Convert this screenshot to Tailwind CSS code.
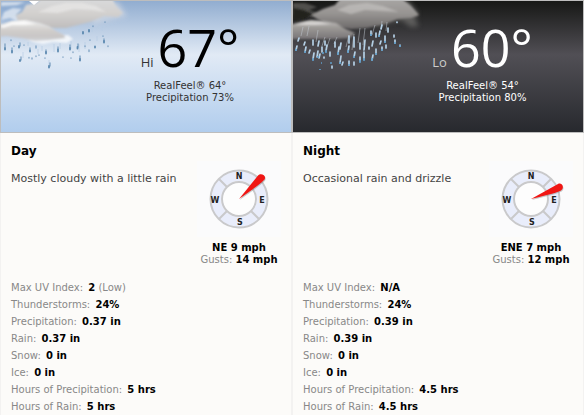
<!DOCTYPE html>
<html lang="en">
<head>
<meta charset="utf-8">
<meta name="viewport" content="width=device-width, initial-scale=1">
<title>Day and night forecast</title>
<script src="https://cdn.jsdelivr.net/npm/@tailwindcss/browser@4"></script>
</head>
<body class="bg-[#fcfbf9] font-['DejaVu_Sans',Verdana,sans-serif] text-[10px] text-black">
<svg width="0" height="0" class="absolute" aria-hidden="true">
  <defs>
    <filter id="soft" x="-20%" y="-40%" width="140%" height="180%"><feGaussianBlur stdDeviation="1.2"/></filter>
    <filter id="haze" x="-40%" y="-80%" width="180%" height="260%"><feGaussianBlur stdDeviation="2.6"/></filter>
    <filter id="drop" x="-10%" y="-10%" width="120%" height="120%"><feGaussianBlur stdDeviation=".35"/></filter>
    <linearGradient id="dayBack" x1="0" y1="0" x2="0" y2="1"><stop offset="0" stop-color="#d9dadc"/><stop offset=".5" stop-color="#d3d1cf"/><stop offset="1" stop-color="#bfbdbd"/></linearGradient>
    <linearGradient id="dayFront" x1="0" y1="0" x2="0" y2="1"><stop offset="0" stop-color="#eeeeed"/><stop offset=".5" stop-color="#d0cdcb"/><stop offset=".8" stop-color="#c8c6c6"/><stop offset="1" stop-color="#d4d6da"/></linearGradient>
    <linearGradient id="nightBack" x1="0" y1="0" x2="0" y2="1"><stop offset="0" stop-color="#a9a7a5"/><stop offset=".5" stop-color="#979492"/><stop offset="1" stop-color="#6d6a6a"/></linearGradient>
    <linearGradient id="nightFront" x1="0" y1="0" x2="0" y2="1"><stop offset="0" stop-color="#c3c1bf"/><stop offset=".4" stop-color="#9c9996"/><stop offset="1" stop-color="#787577"/></linearGradient>
    <g id="dial">
      <circle cx="42" cy="38" r="23" fill="none" stroke="#e9edfb" stroke-width="10"/>
      <circle cx="42" cy="38" r="17" fill="#fdfdfd" stroke="#c9c9cb" stroke-width="2"/>
      <circle cx="42" cy="38" r="28.500" fill="none" stroke="#c9c9cb" stroke-width="2"/>
      <path d="M30 26l-8-8M54 26l8-8M30 50l-8 8M54 50l8 8" stroke="#c9c9cb" stroke-width="2"/>
      <g class="font-['DejaVu_Sans',sans-serif] text-[8px] font-bold" fill="#222" text-anchor="middle">
        <text x="42" y="18">N</text><text x="65" y="42">E</text><text x="43" y="64">S</text><text x="18" y="42">W</text>
      </g>
    </g>
  </defs>
</svg>

<main class="grid min-h-screen grid-cols-2">
  <section class="flex flex-col">
    <header class="relative h-[133px] border border-[#bdbdbd] bg-linear-[180deg,#91add0_0%,#e1eaf5_41%,#b1cded_100%] pl-22 pt-4 text-center text-[#333]">
      <svg class="absolute left-0 top-0" width="140" height="80" viewBox="1 1 140 80" aria-hidden="true">
        <path filter="url(#haze)" fill="#8aa9d0" d="M0 4h30v16H0z" opacity=".7"/>
        <path filter="url(#soft)" fill="#eef2f7" opacity=".7" d="M1 2h24l-8 3-16 1zM4 12l9-4 9 1-6 6 8 4-8 2-6-3-9 2z"/>
        <path filter="url(#haze)" fill="#d3d9e2" opacity=".7" d="M88 2h30l9 14-14 3-20 5z"/>
        <path filter="url(#soft)" fill="url(#dayBack)" d="M26 5l10-2 6-5h70l4 8 7 7-5 4-14-1-14 6-12 3-12 3-16 0-16-5-16-1-2-7 6-3z"/>
        <path filter="url(#soft)" fill="#e8e7e6" opacity=".75" d="M38 12l14-6 14-3 16 0 14 3 10 6-14-2-18-1-16 4z"/>
        <path filter="url(#soft)" fill="#fff" opacity=".75" d="M28 39l20-1 20-3 5 4-6 4-14-1-10 2-10-2z"/>
        <path filter="url(#soft)" fill="url(#dayFront)" d="M-4 25l8-1 8-3 14-1 14 3 9 3 7 5 8 4 1 3-16 2-14 1-14-3-15-2-10 1z"/>
        <path filter="url(#soft)" fill="#fff" opacity=".8" d="M0 26l12-4 12-1 12 3-12 1-12 0-9 3z"/>
        <path fill="#fff" d="M29 1h10l-5 4z"/>
        <g fill="none" stroke="#b6cce4" stroke-width="1" opacity=".7"><path d="M42 46v5M60 43v6M71 41v8M79 44v8M85 42v7M38 49v5M49 60v6M23 52v6M97 36v5M28 42v4M54 44v8M92 26v6M102 26v5"/></g>
        <path filter="url(#drop)" fill="none" stroke="#4f7fa8" stroke-opacity=".9" stroke-width="1.800" stroke-linecap="round" d="M5 48v1.500M12 51v1.500M19 46v1.500M20 60v1M30 50.500v1M46 52v1.500M49 66v1.500M58 49.500v2M70 48v1.500M77.500 47v1.500M80 59v1.500M83 32v1.500M89 30v1.500M95 46.500v1M104 41v1.500"/>
        <path filter="url(#drop)" fill="none" stroke="#5c88b0" stroke-opacity=".75" stroke-width="1.300" stroke-linecap="round" d="M5 44v3M11 40v.5M14 46v.3M12 48v3M20 43v3M24 45v.3M21 57v3M30 48v2M36 46v2M29 57.500v.5M32 58v1M36 56v.5M39 55v.3M46 50v2M45 58v.3M50 63v3M58 47v2M63 57v.3M70 45v3M73 52v.5M71 58v.2M78 44v3M80 56v3M85 46v.5M89 50v1.500M90 40v.3M93 26v.5M103 36v.3M104 39v2M108 46v.5M105 22v.3"/>
      </svg>
      <p class="relative flex h-15 items-baseline justify-center gap-1 font-['Open_Sans','Segoe_UI',sans-serif]"><span class="text-[13px]">Hi</span><span class="text-[52px] leading-15 text-black">67°</span></p>
      <p class="relative mt-[3px] leading-3">RealFeel® 64°<br>Precipitation 73%</p>
    </header>
    <div class="grow border-x border-[#f3f2f1] px-[10px] pt-2">
      <h2 class="text-[12px] font-bold leading-5">Day</h2>
      <div class="flex justify-between">
        <p class="pt-2 text-[11px] leading-5 text-[#444]">Mostly cloudy with a little rain</p>
        <div class="-ml-1 w-21 shrink-0 text-center leading-3">
          <svg class="mb-1 block bg-[#fbfbfc]" width="84" height="76" viewBox="0 0 84 76" role="img" aria-label="Wind from the northeast">
            <use href="#dial"/>
            <path d="M42 38L61 14.500C64 11 70 15 67.500 18.500Q65 22 42 38z" fill="#777" opacity=".4" transform="translate(.6 .9)"/>
            <path d="M42 38L61 14.500C64 11 70 15 67.500 18.500Q65 22 42 38z" fill="#f01614"/>
          </svg>
          <p class="pt-px"><b>NE 9 mph</b></p>
          <p class="whitespace-nowrap"><span class="text-[#888]">Gusts:</span> <b>14 mph</b></p>
        </div>
      </div>
      <ul class="mt-4 flex flex-col gap-[5px] leading-3 text-[#888] [&_b]:ml-[2px] [&_b]:text-black">
        <li>Max UV Index: <b>2</b> (Low)</li>
        <li>Thunderstorms: <b>24%</b></li>
        <li>Precipitation: <b>0.37 in</b></li>
        <li>Rain: <b>0.37 in</b></li>
        <li>Snow: <b>0 in</b></li>
        <li>Ice: <b>0 in</b></li>
        <li>Hours of Precipitation: <b>5 hrs</b></li>
        <li>Hours of Rain: <b>5 hrs</b></li>
      </ul>
    </div>
  </section>

  <section class="flex flex-col">
    <header class="relative h-[133px] border border-[#bdbdbd] bg-linear-[180deg,#171816_0%,#514f55_41%,#27292e_100%] pl-22 pt-4 text-center text-white">
      <svg class="absolute left-0 top-0" width="140" height="80" viewBox="8 1 140 80" aria-hidden="true">
        <path filter="url(#haze)" fill="#6b6967" opacity=".8" d="M90 1h34l9 12-3 6 4 7-8 1-10-7-26 6z"/>
        <path filter="url(#soft)" fill="#5d5b59" opacity=".8" d="M8 3l12 0 12 4-8 3 10 4-8 3-10-3-8 1z"/>
        <path filter="url(#soft)" fill="#22221f" d="M8 8l10 2 10 4-8 5-12 2z"/>
        <path filter="url(#soft)" fill="url(#nightBack)" d="M38 9l12-4 6-7h60l10 8 8 9-8 3-14 1-12 5-18 4-16 1-20-3-14-7-6-4z"/>
        <path filter="url(#soft)" fill="#c9c7c5" opacity=".6" d="M52 10l12-5 18-2 16 3 16 6-18-1-16-1-14 4z"/>
        <path filter="url(#soft)" fill="url(#nightFront)" d="M4 25l12-3 10-2 12 1 13 2 10 6 9 4-5 5-16 1-20 0-25 0z"/>
        <path filter="url(#soft)" fill="#e4e2e0" opacity=".75" d="M10 25l12-3 12 0 12 2-16 1z"/>
        <g filter="url(#drop)" stroke="#c2cad2" stroke-width="1" opacity=".5"><path d="M18 27l-2 9M24 26l-2 10M33 30l-2 12M40 37l-3 9M45 38l-3 9M52 37l-3 7M64 35l-3 12M69 34l-2 16M75 28l-2 15M80 28l-2 17M90 25l-3 10M97 21l-1 8M102 22l-1 9"/></g>
        <g filter="url(#drop)" fill="none" stroke="#b4cfe4" stroke-width="1.700" stroke-linecap="round"><path d="M14 38l-1 3M12 46l-1 4M20 42l-1 3M21 47l-1 5M25 50l-1 3M28 40v5M29 53l-1 6M34 41l-1 5M33 51l-1 6M37 47v5M35 54l-1 4M40 41v4M42 45l-1 6M45 52v4M39 57v1M50 42v5M54 47l-1 7M56 43l-1 6M56 56l-1 7M58 62l-1 3M47 66v2M64 36v7M64 46l-1 6M64 61v4M69 37v10M70 52l-1 5M69 62v3M75 43v6M75 57v4M80 40l-1 10M79 52v7M84 47v2M86 31v4M88 41l-1 5M91 49v5M88 55l-1 5M91 33v4M95 31l-1 5M96 41l-1 3M97 47v3M97 25l-1 4M100 36v6M103 28v4M101 45v3M109 35v2M110 40v3M115 45v1M112 22v.5"/></g>
        <g filter="url(#drop)" stroke="#5f9dc9" stroke-width="1.600"><path d="M11 49v2M28 58v3M33 56v2M38 52v2M41 50v3M53 52v3M63 50v3M69 56v2M75 60v3M79 58v3M87 58v3M91 53v2M97 49v2M100 41v2M64 64v2M110 42v2M115 45v2M20 51v2M86 34v2M94 35v2M45 63h2M36 63h1M35 69v1M55 62v2"/></g>
      </svg>
      <p class="relative flex h-15 items-baseline justify-center gap-1 pl-px font-['Open_Sans','Segoe_UI',sans-serif]"><span class="text-[13px] text-[#ccc]">Lo</span><span class="text-[52px] leading-15">60°</span></p>
      <p class="relative mt-[3px] pl-px leading-3">RealFeel® 54°<br>Precipitation 80%</p>
    </header>
    <div class="grow border-x border-[#f3f2f1] px-[10px] pt-2">
      <h2 class="text-[12px] font-bold leading-5">Night</h2>
      <div class="flex justify-between">
        <p class="pt-2 text-[11px] leading-5 text-[#444]">Occasional rain and drizzle</p>
        <div class="-ml-1 w-21 shrink-0 text-center leading-3">
          <svg class="mb-1 block bg-[#fbfbfc]" width="84" height="76" viewBox="0 0 84 76" role="img" aria-label="Wind from the east-northeast">
            <use href="#dial"/>
            <path d="M42 38L69 23C73 21 76 27 72 29.500Q69 31.500 42 38z" fill="#777" opacity=".4" transform="translate(.6 .9)"/>
            <path d="M42 38L69 23C73 21 76 27 72 29.500Q69 31.500 42 38z" fill="#f01614"/>
          </svg>
          <p class="pt-px"><b>ENE 7 mph</b></p>
          <p class="whitespace-nowrap"><span class="text-[#888]">Gusts:</span> <b>12 mph</b></p>
        </div>
      </div>
      <ul class="mt-4 flex flex-col gap-[5px] leading-3 text-[#888] [&_b]:ml-[2px] [&_b]:text-black">
        <li>Max UV Index: <b>N/A</b></li>
        <li>Thunderstorms: <b>24%</b></li>
        <li>Precipitation: <b>0.39 in</b></li>
        <li>Rain: <b>0.39 in</b></li>
        <li>Snow: <b>0 in</b></li>
        <li>Ice: <b>0 in</b></li>
        <li>Hours of Precipitation: <b>4.5 hrs</b></li>
        <li>Hours of Rain: <b>4.5 hrs</b></li>
      </ul>
    </div>
  </section>
</main>
</body>
</html>
